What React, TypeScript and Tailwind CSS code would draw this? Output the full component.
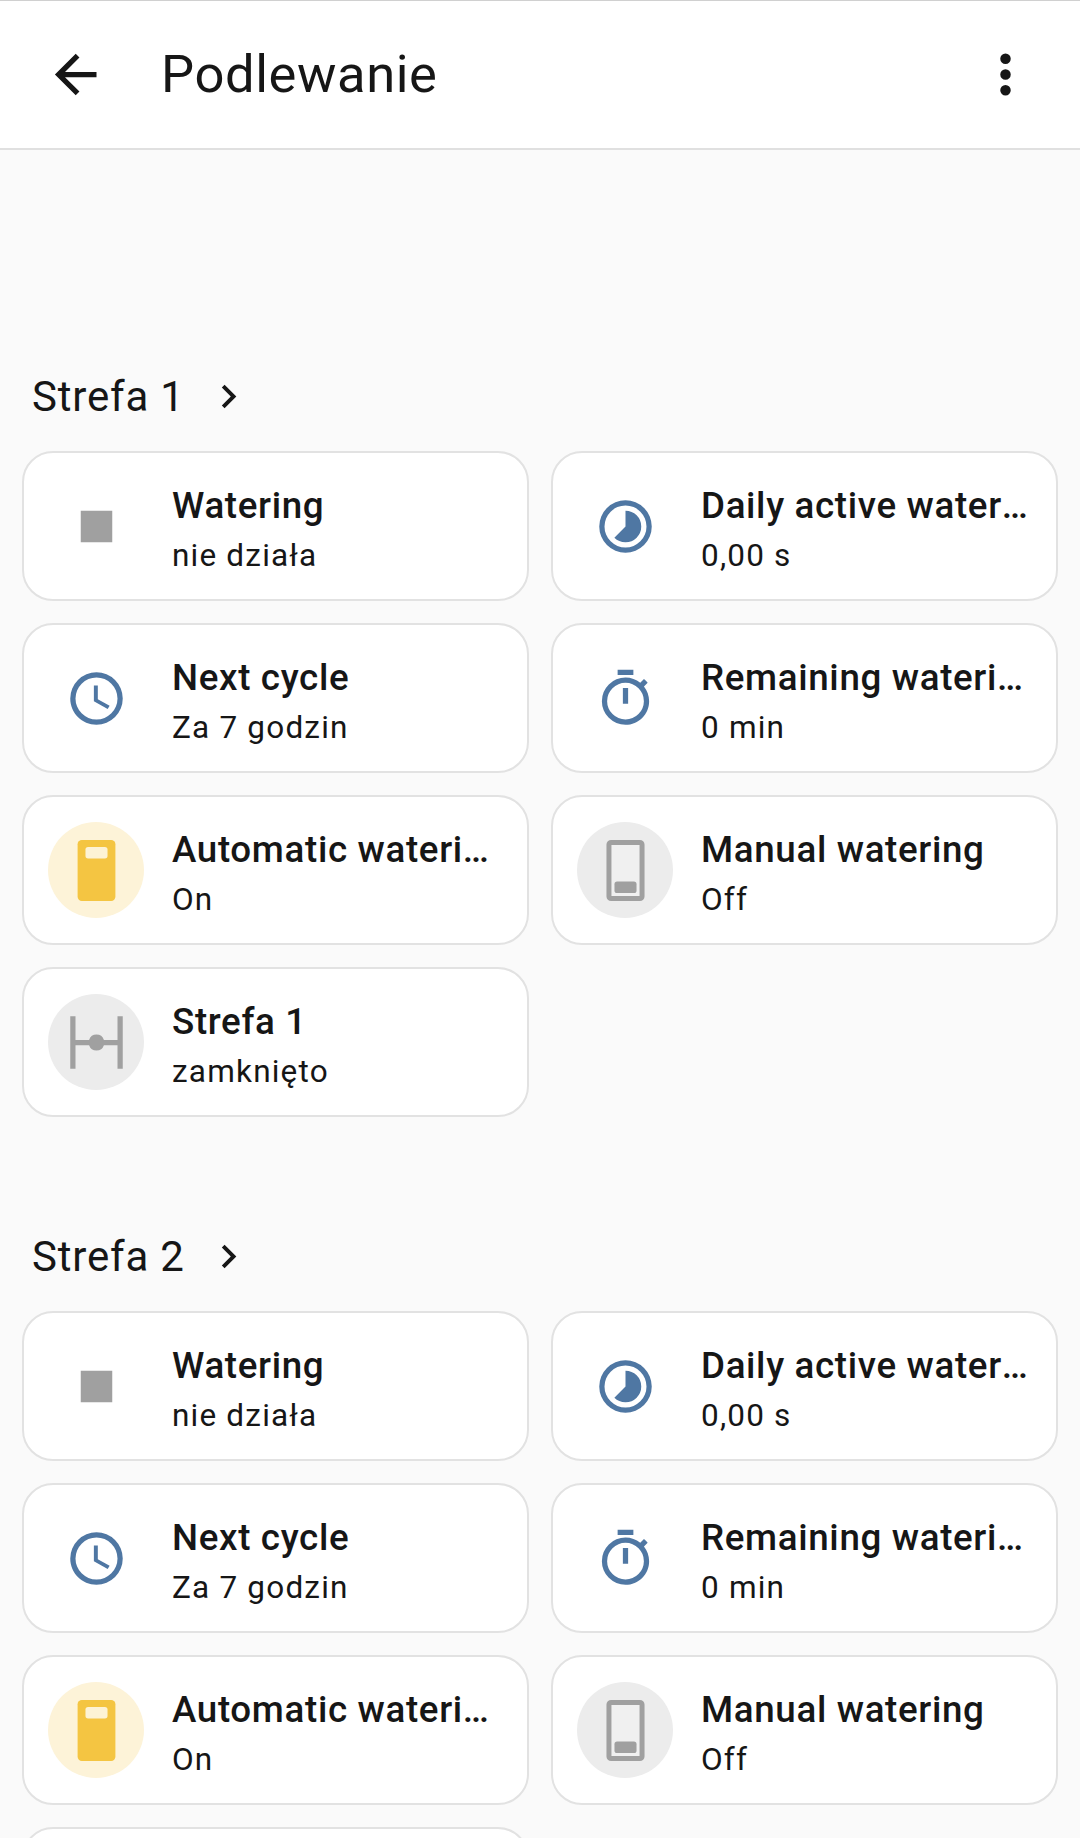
const ARROW_LEFT = "M20,11V13H8L13.5,18.5L12.08,19.92L4.16,12L12.08,4.08L13.5,5.5L8,11H20Z";
const DOTS =
  "M12,16A2,2 0 0,1 14,18A2,2 0 0,1 12,20A2,2 0 0,1 10,18A2,2 0 0,1 12,16M12,10A2,2 0 0,1 14,12A2,2 0 0,1 12,14A2,2 0 0,1 10,12A2,2 0 0,1 12,10M12,4A2,2 0 0,1 14,6A2,2 0 0,1 12,8A2,2 0 0,1 10,6A2,2 0 0,1 12,4Z";
const CHEVRON = "M8.59,16.58L13.17,12L8.59,7.41L10,6L16,12L10,18L8.59,16.58Z";
const STOP = "M18,18H6V6H18V18Z";
const PIE =
  "M12,2A10,10 0 0,1 22,12A10,10 0 0,1 12,22A10,10 0 0,1 2,12A10,10 0 0,1 12,2M12,4A8,8 0 0,0 4,12A8,8 0 0,0 12,20A8,8 0 0,0 20,12A8,8 0 0,0 12,4M12,6A6,6 0 0,1 18,12A6,6 0 0,1 12,18C10.3,18 8.85,17.3 7.76,16.24L12,12V6Z";
const CLOCK =
  "M12,20A8,8 0 0,0 20,12A8,8 0 0,0 12,4A8,8 0 0,0 4,12A8,8 0 0,0 12,20M12,2A10,10 0 0,1 22,12A10,10 0 0,1 12,22C6.47,22 2,17.5 2,12A10,10 0 0,1 12,2M12.5,7V12.25L17,14.75L16.25,15.98L11,13V7H12.5Z";
const TIMER =
  "M12,20A7,7 0 0,1 5,13A7,7 0 0,1 12,6A7,7 0 0,1 19,13A7,7 0 0,1 12,20M19.03,7.39L20.45,5.97C20,5.46 19.55,5 19.04,4.56L17.62,6C16.07,4.74 14.12,4 12,4A9,9 0 0,0 3,13A9,9 0 0,0 12,22C17,22 21,17.97 21,13C21,10.88 20.26,8.93 19.03,7.39M11,14H13V8H11M15,1H9V3H15V1Z";
const VALVE = "M22 2v20h-2v-9h-5.17a3 3 0 0 1-5.66 0H4v9H2V2h2v9h5.17a3 3 0 0 1 5.66 0H20V2h2Z";

function Mdi({ d, className }: { d: string; className: string }) {
  return (
    <svg viewBox="0 0 24 24" className={className} fill="currentColor">
      <path d={d} />
    </svg>
  );
}

function SwitchOn() {
  return (
    <svg viewBox="0 0 24 24" className="h-[63px] w-[63px]">
      <rect x="4.8" y="0.4" width="14.4" height="23.2" rx="1.6" fill="#f4c542" />
      <rect x="7.8" y="3" width="8.4" height="4.4" rx="1" fill="#fdf3d5" />
    </svg>
  );
}

function SwitchOff() {
  return (
    <svg viewBox="0 0 24 24" className="h-[63px] w-[63px]">
      <rect x="5.7" y="1.3" width="12.6" height="21.4" rx="0.8" fill="#f0f0f0" stroke="#a0a0a0" strokeWidth="1.9" />
      <rect x="7.8" y="16.2" width="8.4" height="4.4" rx="1" fill="#a0a0a0" />
    </svg>
  );
}

type Tile = {
  name: string;
  state: string;
  icon: React.ReactNode;
  circle?: string;
};

const tiles = (zone: string): Tile[] => [
  { name: "Watering", state: "nie działa", icon: <Mdi d={STOP} className="h-[63px] w-[63px] text-[#a0a0a0]" /> },
  { name: "Daily active watering time", state: "0,00 s", icon: <Mdi d={PIE} className="h-[63px] w-[63px] text-[#4f77a3]" /> },
  { name: "Next cycle", state: "Za 7 godzin", icon: <Mdi d={CLOCK} className="h-[63px] w-[63px] text-[#4f77a3]" /> },
  { name: "Remaining watering time", state: "0 min", icon: <Mdi d={TIMER} className="h-[63px] w-[63px] text-[#4f77a3]" /> },
  { name: "Automatic watering", state: "On", icon: <SwitchOn />, circle: "bg-[#fdf3d8]" },
  { name: "Manual watering", state: "Off", icon: <SwitchOff />, circle: "bg-[#ececec]" },
  { name: zone, state: "zamknięto", icon: <Mdi d={VALVE} className="h-[63px] w-[63px] text-[#a0a0a0]" />, circle: "bg-[#ececec]" },
];

function Card({ tile }: { tile: Tile }) {
  return (
    <div className="flex h-[150px] min-w-0 items-center gap-[28px] rounded-[31px] border-[2.5px] border-[#e2e2e2] bg-white pl-[24px] pr-[24px]">
      <div className={`flex h-[96px] w-[96px] shrink-0 items-center justify-center rounded-full ${tile.circle ?? ""}`}>
        {tile.icon}
      </div>
      <div className="min-w-0 flex-1 pt-[4px] text-[#161616]">
        <div className="truncate text-[36.75px] leading-[52px] font-medium tracking-[0.65px]">{tile.name}</div>
        <div className="mt-[3px] truncate text-[31.5px] leading-[42px] tracking-[1.2px]">{tile.state}</div>
      </div>
    </div>
  );
}

function Section({ zone }: { zone: string }) {
  return (
    <section className="mb-[115px]">
      <div className="flex h-[48px] items-center pl-[32px] text-[#161616]">
        <h2 className="text-[42px] font-normal tracking-[0.8px]">{zone}</h2>
        <Mdi d={CHEVRON} className="ml-[20px] h-[47px] w-[47px]" />
      </div>
      <div className="mt-[31px] grid grid-cols-2 gap-x-[22px] gap-y-[22px] px-[22px]">
        {tiles(zone).map((t) => (
          <Card key={t.name} tile={t} />
        ))}
      </div>
    </section>
  );
}

export default function App() {
  return (
    <div className="h-[1838px] w-[1080px] overflow-hidden bg-[#fafafa] font-['Roboto',sans-serif]">
      <header className="flex h-[150px] items-center border-t border-b-[2px] border-t-[#d0d0d0] border-b-[#e0e0e0] bg-white pl-[44px] pr-[43px] text-[#161616]">
        <Mdi d={ARROW_LEFT} className="h-[63px] w-[63px]" />
        <h1 className="ml-[54px] flex-1 text-[52.5px] font-normal tracking-[0.6px]">Podlewanie</h1>
        <Mdi d={DOTS} className="h-[63px] w-[63px]" />
      </header>
      <main className="pt-[222px]">
        <Section zone="Strefa 1" />
        <Section zone="Strefa 2" />
      </main>
    </div>
  );
}
